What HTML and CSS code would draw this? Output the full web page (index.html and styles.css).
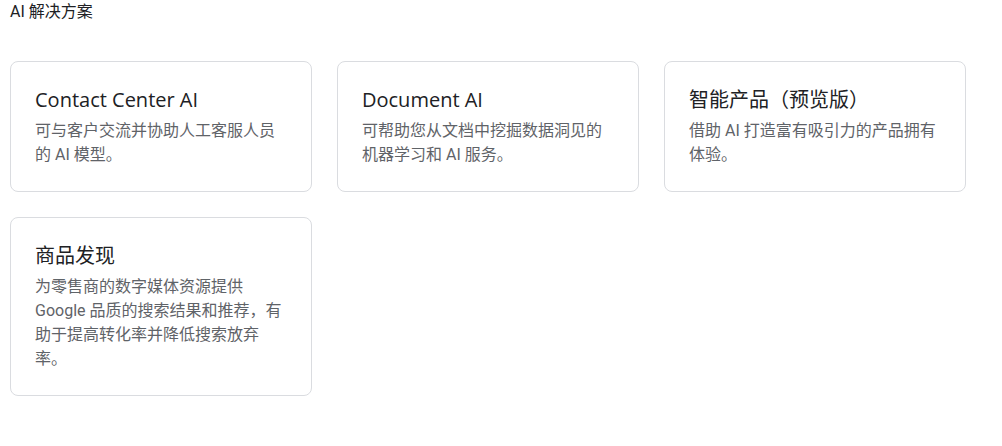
FILE: index.html
```html
<!DOCTYPE html>
<html lang="zh-CN">
<head>
<meta charset="utf-8">
<title>AI 解决方案</title>
<link rel="stylesheet" href="styles.css">
</head>
<body>
<div class="page">
  <h2 class="section-title">AI 解决方案</h2>
  <div class="card-grid">
    <div class="card">
      <h3 class="card-title">Contact Center AI</h3>
      <p class="card-desc">可与客户交流并协助人工客服人员的 AI 模型。</p>
    </div>
    <div class="card">
      <h3 class="card-title">Document AI</h3>
      <p class="card-desc">可帮助您从文档中挖掘数据洞见的机器学习和 AI 服务。</p>
    </div>
    <div class="card">
      <h3 class="card-title">智能产品（预览版）</h3>
      <p class="card-desc">借助 AI 打造富有吸引力的产品拥有体验。</p>
    </div>
    <div class="card">
      <h3 class="card-title">商品发现</h3>
      <p class="card-desc">为零售商的数字媒体资源提供 Google 品质的搜索结果和推荐，有助于提高转化率并降低搜索放弃率。</p>
    </div>
  </div>
</div>
</body>
</html>
```

FILE: styles.css
```css
html, body {
  margin: 0;
  padding: 0;
  background: #ffffff;
}

.page {
  padding: 0 10px;
  font-family: Roboto, "Liberation Sans", "Noto Sans CJK SC", sans-serif;
  color: #202124;
}

.section-title {
  margin: 0;
  font-size: 16px;
  line-height: 24px;
  font-weight: 400;
  color: #202124;
}

.card-grid {
  margin-top: 37px;
  display: grid;
  grid-template-columns: repeat(3, 302px);
  column-gap: 25px;
  row-gap: 25px;
  align-items: start;
}

.card {
  box-sizing: border-box;
  border: 1px solid #dadce0;
  border-radius: 8px;
  padding: 24px;
  background: #ffffff;
}

.card-title {
  margin: 0 0 5px;
  font-family: "Open Sans", "Noto Sans CJK SC", sans-serif;
  font-size: 20px;
  line-height: 28px;
  font-weight: 400;
  color: #202124;
}

.card-desc {
  margin: 0;
  font-size: 16px;
  line-height: 24px;
  color: #5f6368;
}
```
